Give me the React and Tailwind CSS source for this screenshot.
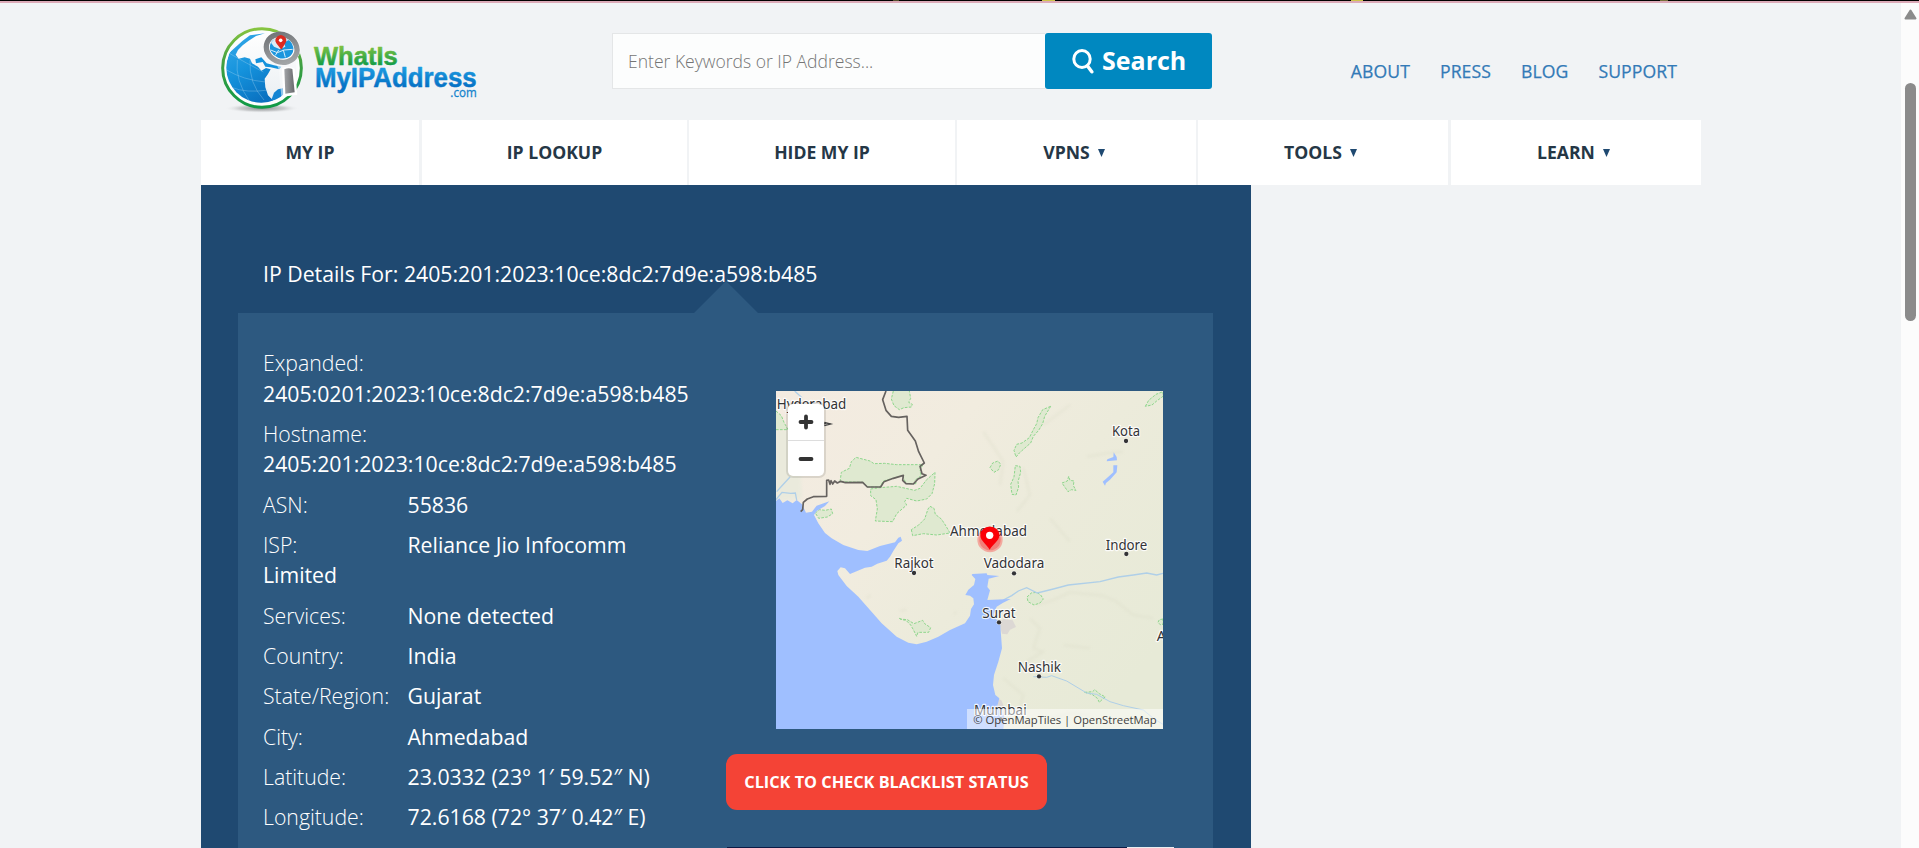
import React from "react";

const OPEN = "font-['Open_Sans','Noto_Sans',sans-serif]";

function Logo() {
  return (
    <svg className="block h-[100px] w-[270px]" viewBox="45 60 810 300">
      <defs>
        <linearGradient id="ring" x1="0" y1="0" x2="0" y2="1">
          <stop offset="0" stopColor="#86c440" />
          <stop offset="0.45" stopColor="#3f9f42" />
          <stop offset="1" stopColor="#0f9a46" />
        </linearGradient>
        <linearGradient id="sea" x1="0.2" y1="0" x2="0.6" y2="1">
          <stop offset="0" stopColor="#35a9e8" />
          <stop offset="0.5" stopColor="#1492dc" />
          <stop offset="1" stopColor="#0a71c0" />
        </linearGradient>
        <linearGradient id="ice" x1="0" y1="0" x2="0" y2="1">
          <stop offset="0" stopColor="#ffffff" />
          <stop offset="1" stopColor="#e9eef2" />
        </linearGradient>
        <linearGradient id="steel" x1="0" y1="0" x2="1" y2="1">
          <stop offset="0" stopColor="#6d7073" />
          <stop offset="0.5" stopColor="#8b8e91" />
          <stop offset="1" stopColor="#a9acae" />
        </linearGradient>
        <linearGradient id="steelBar" x1="0" y1="0" x2="1" y2="0">
          <stop offset="0" stopColor="#a3a5a8" />
          <stop offset="1" stopColor="#67696c" />
        </linearGradient>
        <linearGradient id="green" x1="0" y1="0" x2="0" y2="1">
          <stop offset="0.15" stopColor="#83c341" />
          <stop offset="0.85" stopColor="#0e9a48" />
        </linearGradient>
        <linearGradient id="blue" x1="0" y1="0" x2="0" y2="1">
          <stop offset="0.1" stopColor="#1fa0e4" />
          <stop offset="0.8" stopColor="#0671c4" />
        </linearGradient>
        <radialGradient id="shade">
          <stop offset="0" stopColor="#8b8d90" />
          <stop offset="0.6" stopColor="#c3c5c7" stopOpacity="0.8" />
          <stop offset="1" stopColor="#f1f3f5" stopOpacity="0" />
        </radialGradient>
        <clipPath id="globe">
          <circle cx="184" cy="203" r="105" />
        </clipPath>
      </defs>
      <ellipse cx="186" cy="325" rx="112" ry="14" fill="url(#shade)" />
      <circle cx="186" cy="204" r="118" fill="#fdfefe" stroke="url(#ring)" strokeWidth="9" />
      <g clipPath="url(#globe)">
        <rect x="75" y="95" width="220" height="220" fill="url(#ice)" />
        <path
          d="M128 122 L150 106 L195 100 L168 108 L146 122 L128 136 L114 150 L107 164 L116 176 L134 172 L150 176 L156 190 L174 200 L184 212 L198 204 L212 208 L204 222 L194 236 L196 262 L204 286 L222 304 L190 316 L150 308 L108 284 L82 244 L76 200 L88 158 Z"
          fill="url(#sea)"
        />
        <path d="M166 178 L184 172 L200 190 L222 196 L244 200 L238 208 L212 202 L196 200 L188 186 L168 190Z" fill="#1492dc" />
        <path d="M214 300 L222 278 L234 268 L262 262 L250 284 L228 302Z" fill="#1585d3" />
        <path d="M80 210 Q130 240 196 246 M94 262 Q140 280 204 270 M112 180 Q104 240 150 306 M150 180 Q146 250 192 300 M88 160 Q140 190 190 216" fill="none" stroke="#bfe0f5" strokeWidth="1.5" opacity="0.6" />
      </g>
      <path d="M196 110 L286 110 L294 180 L288 284 L244 288 L236 208 Z" fill="#f7fafb" opacity="0.55" />
      <ellipse cx="245" cy="143" rx="57" ry="47" fill="#fff" transform="rotate(18 245 143)" />
      <ellipse cx="245" cy="145" rx="47" ry="41" fill="#fff" stroke="url(#steel)" strokeWidth="16" transform="rotate(24 245 145)" />
      <ellipse cx="245" cy="144" rx="36" ry="31" fill="#1b96de" transform="rotate(20 245 144)" />
      <path d="M213 128 L226 114 L246 110 L266 120 L252 128 L256 140 L240 148 L222 140Z" fill="#eef5f9" opacity="0.9" />
      <path d="M212 150 L232 158 L252 150 L278 148 M226 166 L236 150 M256 172 L250 150" stroke="#d5ecf8" strokeWidth="3" fill="none" />
      <path d="M244 149 L229 130 A16 16 0 1 1 256 130 Z" fill="#dd2a20" />
      <circle cx="242" cy="121" r="5.5" fill="#fff" />
      <path d="M246 204 Q266 196 284 206 L292 284 L250 290 Z" fill="#fff" />
      <path d="M253 208 Q265 202 277 207 L284 277 L256 281 Z" fill="url(#steelBar)" />
      <g fontFamily="'Liberation Sans', Arial, sans-serif" fontWeight="700" strokeLinejoin="round">
        <text x="342" y="194" fontSize="80" textLength="251" lengthAdjust="spacingAndGlyphs" fill="url(#green)" stroke="url(#green)" strokeWidth="1.5">WhatIs</text>
        <text x="345" y="260" fontSize="81" textLength="485" lengthAdjust="spacingAndGlyphs" fill="url(#blue)" stroke="url(#blue)" strokeWidth="1.5">MyIPAddress</text>
      </g>
      <text x="751" y="290" fontSize="36" fontFamily="'Open Sans', sans-serif" textLength="79" lengthAdjust="spacingAndGlyphs" fill="#1583cc" stroke="#1583cc" strokeWidth="0.8">.com</text>
    </svg>
  );
}

const PLACES = [
  { name: "Hyderabad", x: 20, y: 73, w: 209 },
  { name: "Kota", x: 1026, y: 154, w: 84, dot: [1068, 168] },
  { name: "Ahmedabad", x: 540, y: 452, w: 231 },
  { name: "Indore", x: 1007, y: 494, w: 125, dot: [1069, 507] },
  { name: "Rajkot", x: 373, y: 550, w: 118, dot: [432, 564] },
  { name: "Vadodara", x: 641, y: 550, w: 182, dot: [732, 565] },
  { name: "Surat", x: 637, y: 700, w: 100, dot: [687, 712] },
  { name: "Nashik", x: 743, y: 861, w: 130, dot: [807, 874] },
  { name: "Mumbai", x: 612, y: 990, w: 158, dot: [692, 1003] },
];

const PARKS = [
  "M370 18 L364 42 L372 62 L388 74 L402 68 L424 66 L427 58 L416 52 L422 40 L418 18",
  "M18 78 L34 92 L42 112 L54 134 L18 134",
  "M210 290 L214 262 L238 250 L244 230 L258 217 L300 228 L312 236 L344 235 L380 239 L458 239 L450 258 L454 272 L434 286 L440 296 L408 296 L398 272 L340 288 L330 306 L292 306 L278 292 Z",
  "M302 312 L330 308 L380 304 L434 316 L450 310 L470 284 L495 262 L494 296 L486 326 L470 342 L440 348 L410 340 L404 350 L410 360 L380 386 L368 410 L316 408 L322 372 L318 344 L302 332 Z",
  "M424 434 L428 452 L460 446 L500 450 L540 444 L526 420 L514 402 L496 388 L492 370 L480 364 L474 372 L464 402 L446 420 Z",
  "M136 384 L148 374 L166 376 L184 372 L188 386 L172 396 L146 400 Z",
  "M842 64 L818 74 L804 98 L800 116 L790 134 L778 158 L756 174 L740 178 L732 196 L738 216 L748 204 L768 186 L782 174 L790 154 L806 136 L818 116 L824 94 Z",
  "M660 248 L668 234 L684 228 L692 238 L686 254 L672 262 Z",
  "M736 242 L750 244 L752 262 L744 290 L746 306 L738 330 L726 328 L722 298 L732 276 Z",
  "M876 294 L892 288 L896 274 L900 286 L912 288 L910 302 L918 316 L904 314 L894 320 Z",
  "M1126 64 L1136 46 L1158 28 L1179 20 L1179 34 L1160 48 L1146 60 Z",
  "M771 636 L784 624 L800 622 L812 630 L820 642 L810 654 L792 660 L774 650 Z",
  "M388 700 L396 704 L408 706 L422 720 L430 734 L440 754 L444 742 L476 742 L482 728 L464 716 L458 706 L432 716 L412 704 L390 702 Z",
  "M944 922 L968 920 L974 914 L988 926 L1006 936 L998 942 L988 952 L982 940 L966 928 Z",
  "M1179 702 L1168 704 L1164 712 L1172 720 L1179 718 Z",
];

function MapDrawing() {
  return (
    <svg className="block h-[338px] w-[387px]" viewBox="18 18 1161 1014">
      <defs>
        <linearGradient id="land" x1="0" y1="0" x2="1" y2="0.75">
          <stop offset="0" stopColor="#f4ebe1" />
          <stop offset="0.35" stopColor="#f1ecdf" />
          <stop offset="0.6" stopColor="#ecebdb" />
          <stop offset="1" stopColor="#e7ead7" />
        </linearGradient>
        <filter id="soft" x="-20%" y="-20%" width="140%" height="140%">
          <feGaussianBlur stdDeviation="5" />
        </filter>
      </defs>
      <rect x="18" y="18" width="1161" height="1014" fill="url(#land)" />
      <path d="M18 134 L54 134 L90 220 L96 340 L18 350Z" fill="#e7eadb" opacity="0.7" filter="url(#soft)" />
      <g fill="none" stroke="#d9dac6" strokeWidth="6" opacity="0.4" filter="url(#soft)">
        <path d="M640 140 L700 230 L690 300 M760 250 L780 330 L740 380 M820 120 L900 60 M950 215 L1010 205 L1060 200 M800 660 L850 645 L900 622 L1000 632 L1040 650 L1090 690 L1150 700" />
        <path d="M780 700 L810 730 L790 790 L820 800 L770 830 M700 880 L760 930 L740 990 M840 1000 L900 985 L960 990 M840 400 L900 470 M880 780 L960 790" />
        <path d="M390 678 L410 674 M290 640 L302 630 M560 680 L552 688" />
      </g>
      <g fill="#dfe9d0" stroke="#8ed68c" strokeWidth="3" strokeDasharray="8 4">
        {PARKS.map((d) => (
          <path key={d} d={d} />
        ))}
      </g>
      <path d="M687 712 L700 702 L728 706 L738 726 L720 734 L712 748 L696 746Z" fill="#dcd8d4" />
      <path d="M672 935 L694 946 L706 975 L700 1000 L690 975Z" fill="#dcd8d4" />
      <g fill="none" stroke="#afcfe8" strokeWidth="4">
        <path d="M20 320 L38 300 L60 276 M18 344 L36 322 L62 325 L76 324 L80 345 M74 18 L96 38" />
        <path d="M700 645 L725 632 L745 618 L770 608 L802 624 L850 612 L895 600 L990 590 L1045 576 L1090 570 L1130 564 L1160 570 L1179 565" />
        <path d="M790 875 L830 877 L845 872 L890 888 L950 924 L980 928 L1020 950 L1060 962 L1120 975 L1150 1000 L1179 1018" strokeWidth="3" />
      </g>
      <path
        d="M18 348 L28 340 L38 354 L52 346 L68 355 L80 345 L96 358 L108 383 L126 380 L140 362 L178 349 L165 363 L140 378 L132 390 L145 415 L165 444 L185 460 L220 480 L265 495 L292 498 L330 483 L375 472 L385 458 L392 455 L396 467 L385 475 L370 498 L360 515 L350 527 L322 536 L305 545 L285 548 L240 567 L225 550 L212 547 L202 558 L205 570 L230 603 L265 635 L300 675 L335 715 L380 755 L415 773 L440 778 L470 770 L505 755 L540 735 L585 715 L600 692 L603 672 L612 658 L610 640 L600 632 L586 630 L595 614 L612 600 L616 582 L605 570 L607 567 L650 565 L652 570 L688 573 L656 581 L652 606 L660 616 L652 645 L722 642 L698 654 L680 665 L670 690 L685 710 L691 720 L693 750 L696 790 L685 830 L672 870 L669 900 L676 930 L688 940 L682 962 L696 980 L704 1000 L700 1032 L18 1032 Z"
        fill="#9fbfff"
      />
      <path d="M1031 202 L1040 216 L1041 226 L1010 229 L1012 223 L1030 216Z M1030 241 L1042 241 L1040 262 L1020 284 L1008 294 L1005 302 L998 290 L1010 280 L1030 262Z" fill="#9fbfff" />
      <path
        d="M348 18 L338 44 L348 76 L364 94 L386 97 L411 94 L413 136 L436 168 L446 200 L463 234 L450 244 L456 266 L468 271 L444 282 L430 297 L408 296 L398 286 L400 271 L370 280 L342 290 L332 306 L292 306 L278 292 L226 293 L212 289 L202 294 L194 288 L188 297 L183 287 L180 298 L176 285 L170 286 L170 334 L130 335 L112 342 L100 352 L98 374 L92 380"
        fill="none"
        stroke="#66625f"
        strokeWidth="5"
        strokeLinejoin="round"
      />
      <path d="M163 112 L182 117 L163 122 M170 114 L162 117" fill="none" stroke="#444" strokeWidth="4" />
      <g fontFamily="'Noto Sans', 'Open Sans', sans-serif" fontSize="43" fill="#333336" stroke="#ffffff" strokeOpacity="0.85" strokeWidth="7" strokeLinejoin="round" paintOrder="stroke">
        {PLACES.map((p) => (
          <g key={p.name}>
            <text x={p.x} y={p.y} textLength={p.w} lengthAdjust="spacingAndGlyphs">{p.name}</text>
            {p.dot && <circle cx={p.dot[0]} cy={p.dot[1]} r="6.5" strokeWidth="3" />}
          </g>
        ))}
        <text x="1160" y="767">A</text>
      </g>
      <circle cx="660" cy="464" r="38" fill="#ff2020" opacity="0.32" />
      <circle cx="660" cy="464" r="32" fill="#f02020" opacity="0.3" />
      <path d="M659 494 C650 478 631 468 631 451 A28 26 0 0 1 688 451 C688 468 668 478 659 494Z" fill="#fb0007" />
      <circle cx="659" cy="451" r="11" fill="#fff" />
    </svg>
  );
}

function MapCard() {
  return (
    <div className="relative h-[338px] w-[387px] overflow-hidden">
      <MapDrawing />
      <div className="absolute left-3 top-[13px] flex h-[72px] w-9 flex-col rounded-[5px] bg-white shadow-[0_0_0_2px_rgba(0,0,0,0.1)]">
        <button className="flex h-[37px] items-center justify-center border-b border-[#dddddd]">
          <svg className="size-4" viewBox="0 0 16 16"><path d="M8 2.5V13.5M2.5 8H13.5" stroke="#333" strokeWidth="3.8" strokeLinecap="round" /></svg>
        </button>
        <button className="flex flex-1 items-center justify-center">
          <svg className="size-4" viewBox="0 0 16 16"><path d="M2.5 8H13.5" stroke="#333" strokeWidth="3.8" strokeLinecap="round" /></svg>
        </button>
      </div>
      <div className="absolute bottom-0 right-0 flex h-5 w-[196px] items-center justify-center whitespace-nowrap bg-white/50 pt-px text-[11.25px] leading-5 text-[#404040]">
        © OpenMapTiles | OpenStreetMap
      </div>
    </div>
  );
}

const NAV = [
  { label: "MY IP", cls: "w-[218px] mr-[3px]" },
  { label: "IP LOOKUP", cls: "w-[265px] mr-[2px]" },
  { label: "HIDE MY IP", cls: "w-[266px] mr-[2px]" },
  { label: "VPNS", cls: "w-[239px] mr-[2px] pr-[5px]", menu: true },
  { label: "TOOLS", cls: "w-[250px] mr-[3px] pr-[5px]", menu: true },
  { label: "LEARN", cls: "w-[250px] pr-[5px]", menu: true },
];

const DETAILS = [
  ["Expanded:", "2405:0201:2023:10ce:8dc2:7d9e:a598:b485"],
  ["Hostname:", "2405:201:2023:10ce:8dc2:7d9e:a598:b485"],
  ["ASN:", "55836"],
  ["ISP:", "Reliance Jio Infocomm Limited"],
  ["Services:", "None detected"],
  ["Country:", "India"],
  ["State/Region:", "Gujarat"],
  ["City:", "Ahmedabad"],
  ["Latitude:", "23.0332 (23° 1′ 59.52″ N)"],
  ["Longitude:", "72.6168 (72° 37′ 0.42″ E)"],
];

function Header() {
  return (
    <header className="flex h-[117px] items-start">
      <div className="ml-[14px] mt-[17px]"><Logo /></div>
      <div className="ml-[127px] mt-[30px] flex h-14 w-[600px]">
        <div className="flex h-14 w-[433px] items-center border border-r-0 border-[#e4e6e7] bg-[#fcfdfd] pl-[15px] text-[17.55px] font-light text-[#757575]">
          <span>Enter Keywords or IP Address...</span>
        </div>
        <button className="flex flex-1 items-center rounded-[3px] bg-[#0088c0] pl-[27px] text-[25px] font-bold text-white">
          <svg className="mr-[8px] h-[25px] w-[22px]" viewBox="0 0 22 25" fill="none" stroke="#fff">
            <ellipse cx="10" cy="10" rx="8.2" ry="8.5" strokeWidth="3" />
            <path d="M15.5 17L19.8 22.8" strokeWidth="3.4" strokeLinecap="round" />
          </svg>
          Search
        </button>
      </div>
      <nav className="ml-auto mr-6 mt-[56px] flex gap-[30px] text-[17.6px] font-medium leading-6 tracking-[0.1px] text-[#337ab7] [-webkit-text-stroke:0.25px_#337ab7]">
        <a>ABOUT</a>
        <a>PRESS</a>
        <a>BLOG</a>
        <a>SUPPORT</a>
      </nav>
    </header>
  );
}

export default function App() {
  return (
    <div className={`flex h-[848px] w-[1919px] flex-col overflow-hidden bg-[#f1f3f5] ${OPEN}`}>
      <div className="flex h-px w-full shrink-0 bg-black pl-[893px]">
        <i className="mr-[143px] h-px w-[6px] bg-[#55502e]" />
        <i className="mr-[296px] h-px w-[13px] bg-[#cfc54c]" />
        <i className="mr-[297px] h-px w-3 bg-[#cfc54c]" />
        <i className="h-px w-2 bg-[#77703a]" />
      </div>
      <div className="h-[2px] w-full shrink-0 bg-[#dcaab8]" />
      <div className="flex min-h-0 flex-1">
        <div className="ml-[201px] w-[1500px]">
          <Header />
          <nav className="flex h-[65px]">
            {NAV.map((n) => (
              <a key={n.label} className={`flex shrink-0 items-center justify-center bg-white text-[17.6px] font-bold text-[#253746] ${n.cls}`}>
                {n.label}
                {n.menu && (
                  <svg className="ml-[8px] mt-px h-2 w-[7px]" viewBox="0 0 7 8"><path d="M0 0H7L3.5 8Z" fill="#1f4971" /></svg>
                )}
              </a>
            ))}
          </nav>
          <main className="h-[663px] w-[1050px] overflow-hidden bg-[#1f4971] px-[37px] text-white">
            <h1 className="relative h-32 pl-[25px] pt-[73.5px] text-[21.25px] leading-[30.33px]">
              <span className="relative z-10">IP Details For: 2405:201:2023:10ce:8dc2:7d9e:a598:b485</span>
              <svg className="absolute bottom-0 left-[456px] h-8 w-16" viewBox="0 0 64 32"><path d="M32 0L64 32H0Z" fill="#2d5980" /></svg>
            </h1>
            <section className="flex h-[535px] w-[975px] bg-[#2d5980] pl-[25px]">
              <div className="w-[463px] shrink-0 pt-[35.45px]">
                <div className="w-[428px]">
                  {DETAILS.map(([k, v]) => (
                    <p key={k} className="mb-[10px] text-[21.25px] leading-[30.33px]">
                      <span className="inline-block min-w-[144.5px] font-light">{k}</span>
                      <span className="font-medium">{v}</span>
                    </p>
                  ))}
                </div>
              </div>
              <div className="flex h-[535px] w-[448px] flex-col pt-[78px]">
                <div className="ml-[50px]"><MapCard /></div>
                <button className="mt-[25px] h-14 w-[321px] shrink-0 rounded-[11px] bg-[#f44336] text-[16.3px] font-bold text-white">
                  CLICK TO CHECK BLACKLIST STATUS
                </button>
                <div className="ml-px mt-[37px] flex h-px shrink-0">
                  <div className="w-[400px] bg-[#0b1b45]" />
                  <div className="w-[47px] bg-[#e9edf0]" />
                </div>
              </div>
            </section>
          </main>
        </div>
        <div className="ml-auto flex w-[18px] flex-col items-center bg-[#fcfcfc]">
          <svg className="mt-[6px] h-[11px] w-[13px] shrink-0" viewBox="0 0 13 11"><path d="M6.5 1.5L11.5 9.5H1.5Z" fill="#8b8b8b" stroke="#8b8b8b" strokeWidth="2" strokeLinejoin="round" /></svg>
          <div className="ml-px mt-[63px] h-[238px] w-[11px] shrink-0 rounded-full bg-[#8b8b8b]" />
        </div>
      </div>
    </div>
  );
}
